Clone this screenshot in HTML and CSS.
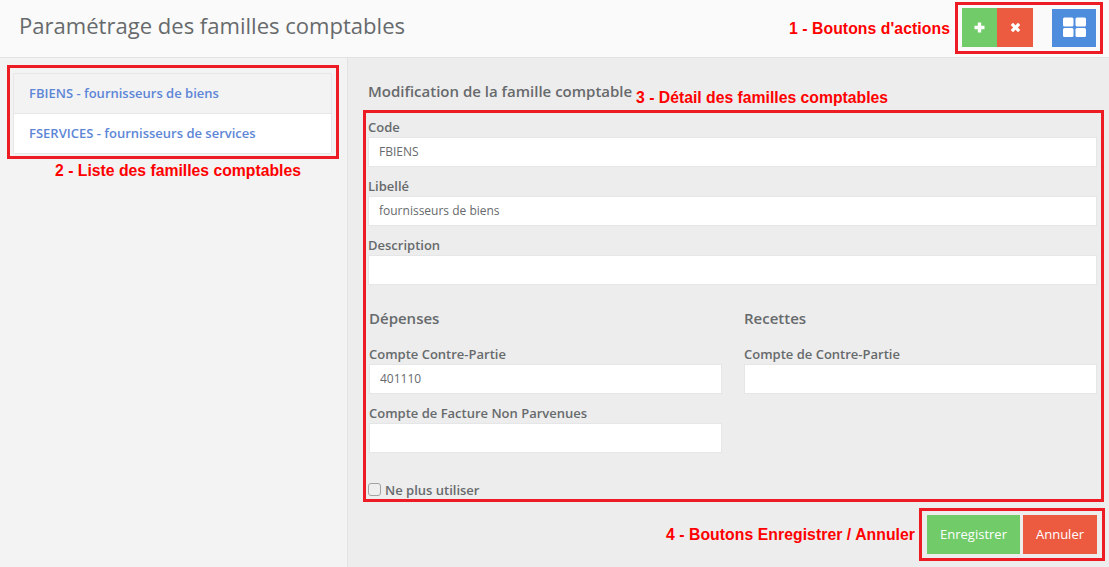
FILE: index.html
```html
<!DOCTYPE html>
<html lang="fr">
<head>
<meta charset="utf-8">
<title>Paramétrage des familles comptables</title>
<link rel="stylesheet" href="styles.css">
</head>
<body>
<div class="page">
  <header class="topbar">
    <h1 class="title">Paramétrage des familles comptables</h1>
    <div class="actions">
      <div class="btn-pair">
        <button class="icon-btn green" type="button" aria-label="Ajouter">
          <svg width="11" height="11" viewBox="0 0 11 11"><path d="M3.800 0.500h3.400v3.300h3.300v3.400H7.200v3.300H3.800V7.200H0.500V3.800h3.300z" fill="#fff"/></svg>
        </button>
        <button class="icon-btn red" type="button" aria-label="Supprimer">
          <svg width="11" height="11" viewBox="0 0 11 11"><path d="M3 0.700 5.500 3.200 8 0.700 10.300 3 7.800 5.500 10.300 8 8 10.300 5.500 7.800 3 10.300 0.700 8 3.200 5.500 0.700 3z" fill="#fff"/></svg>
        </button>
      </div>
      <button class="icon-btn blue" type="button" aria-label="Affichage">
        <svg width="23" height="20" viewBox="0 0 23 20"><rect x="0" y="0.500" width="10.500" height="9" rx="1.500" fill="#fff"/><rect x="12.500" y="0.500" width="10.500" height="9" rx="1.500" fill="#fff"/><rect x="0" y="11" width="10.500" height="9" rx="1.500" fill="#fff"/><rect x="12.500" y="11" width="10.500" height="9" rx="1.500" fill="#fff"/></svg>
      </button>
    </div>
  </header>
  <div class="body">
    <aside class="sidebar">
      <ul class="family-list">
        <li class="family-item selected"><a href="#">FBIENS - fournisseurs de biens</a></li>
        <li class="family-item"><a href="#">FSERVICES - fournisseurs de services</a></li>
      </ul>
    </aside>
    <main class="content">
      <h2 class="section-title">Modification de la famille comptable</h2>
      <form class="form">
        <div class="field"><label class="label">Code</label><input class="input" type="text" value="FBIENS"></div>
        <div class="field"><label class="label">Libellé</label><input class="input" type="text" value="fournisseurs de biens"></div>
        <div class="field"><label class="label">Description</label><input class="input" type="text"></div>
        <div class="columns">
          <div class="column">
            <h3 class="column-title">Dépenses</h3>
            <div class="field"><label class="label">Compte Contre-Partie</label><input class="input" type="text" value="401110"></div>
            <div class="field"><label class="label">Compte de Facture Non Parvenues</label><input class="input" type="text"></div>
          </div>
          <div class="column">
            <h3 class="column-title">Recettes</h3>
            <div class="field"><label class="label">Compte de Contre-Partie</label><input class="input" type="text"></div>
          </div>
        </div>
        <label class="check"><input class="checkbox" type="checkbox"><span>Ne plus utiliser</span></label>
      </form>
      <div class="form-buttons">
        <button class="text-btn green" type="button">Enregistrer</button>
        <button class="text-btn red" type="button">Annuler</button>
      </div>
    </main>
  </div>

  <div class="frame frame-1"></div>
  <div class="frame frame-2"></div>
  <div class="frame frame-3"></div>
  <div class="frame frame-4"></div>
  <span class="note note-1">1 - Boutons d'actions</span>
  <span class="note note-2">2 - Liste des familles comptables</span>
  <span class="note note-3">3 - Détail des familles comptables</span>
  <span class="note note-4">4 - Boutons Enregistrer / Annuler</span>
</div>
</body>
</html>
```
FILE: styles.css
```css
* { box-sizing: border-box; }
html, body { margin: 0; padding: 0; }
body {
  font-family: "Open Sans", sans-serif;
  font-size: 13px;
  color: #676a6c;
  background: #ededed;
}
.page {
  position: relative;
  width: 1109px;
  height: 567px;
  overflow: hidden;
  display: flex;
  flex-direction: column;
}
.topbar {
  height: 58px;
  flex: none;
  background: #fafafa;
  border-bottom: 1px solid #e2e2e2;
  display: flex;
  justify-content: space-between;
  padding: 8px 13px 0 19px;
}
.title {
  margin: -1px 0 0;
  font-size: 22.050px;
  font-weight: 400;
  line-height: 36px;
}
.actions { display: flex; gap: 19px; align-items: flex-start; }
.btn-pair { display: flex; }
button {
  border: 0;
  padding: 0;
  font-family: inherit;
  color: #fff;
  display: flex;
  align-items: center;
  justify-content: center;
}
.icon-btn { height: 39px; padding-bottom: 1px; }
.icon-btn.green { width: 35px; }
.icon-btn.red { width: 36px; }
.icon-btn.blue { width: 44px; height: 38px; margin-top: 1px; padding-bottom: 3px; }
.green { background: #70cb68; }
.red { background: #ec5a40; }
.blue { background: #4e8cde; }
.body { flex: 1; display: flex; min-height: 0; }
.sidebar {
  width: 348px;
  flex: none;
  background: #f3f3f3;
  border-right: 1px solid #e2e2e2;
  padding: 15px 15px 0 13px;
}
.family-list {
  list-style: none;
  margin: 0;
  padding: 0;
  border: 1px solid #e7e7e7;
  border-radius: 2px;
}
.family-item {
  height: 39px;
  display: flex;
  align-items: center;
  padding: 0 0 2px 15px;
  background: #fff;
  font-weight: 600;
}
.family-item.selected {
  height: 40px;
  background: #f3f3f4;
  border-bottom: 1px solid #e7e7e7;
}
.family-item a { color: #5d86d6; text-decoration: none; }
.content { flex: 1; padding: 23px 12px 0 20px; }
.section-title {
  margin: 0 0 17px;
  font-size: 15px;
  font-weight: 600;
  line-height: 20px;
}
.form { display: flex; flex-direction: column; }
.field { display: flex; flex-direction: column; margin-bottom: 10px; }
.label {
  font-weight: 600;
  font-size: 13px;
  line-height: 19px;
  margin-bottom: 0;
}
.input {
  height: 30px;
  border: 1px solid #e5e6e7;
  background: #fff;
  padding: 0 10px 2px;
  font: 400 12px "Open Sans", sans-serif;
  color: #676a6c;
  width: 100%;
}
.columns {
  display: grid;
  grid-template-columns: 353px 353px;
  column-gap: 22px;
  padding: 13px 0 0 1px;
}
.column-title {
  margin: 0 0 17px;
  font-size: 15px;
  font-weight: 600;
  line-height: 20px;
}
.check {
  display: flex;
  align-items: flex-start;
  gap: 4px;
  margin-top: 18px;
  font-weight: 600;
  line-height: 19px;
}
.checkbox {
  appearance: none;
  width: 13px;
  height: 13px;
  margin: 2px 0 0;
  border: 1px solid #a3a3a3;
  border-radius: 3px;
  background: #eeeeee;
}
.form-buttons {
  display: flex;
  justify-content: flex-end;
  gap: 3px;
  margin-top: 15px;
}
.text-btn { height: 39px; padding-bottom: 1px; font-size: 13px; font-weight: 400; }
.text-btn.green { width: 93px; }
.text-btn.red { width: 74px; }

.frame { position: absolute; border: 3px solid #ed1c24; }
.frame-1 { left: 955px; top: 2px; width: 148px; height: 52px; }
.frame-2 { left: 7px; top: 65px; width: 332px; height: 94px; }
.frame-3 { left: 363px; top: 110px; width: 741px; height: 392px; }
.frame-4 { left: 919px; top: 508px; width: 186px; height: 53px; }
.note {
  position: absolute;
  font-family: "Liberation Sans", sans-serif;
  font-weight: 700;
  font-size: 15.750px;
  line-height: 18px;
  color: #ff0000;
  white-space: nowrap;
}
.note-1 { left: 789px; top: 20px; letter-spacing: 0.070px; }
.note-2 { left: 55px; top: 162px; }
.note-3 { left: 636px; top: 89px; }
.note-4 { left: 666px; top: 526px; letter-spacing: 0.060px; }
```
